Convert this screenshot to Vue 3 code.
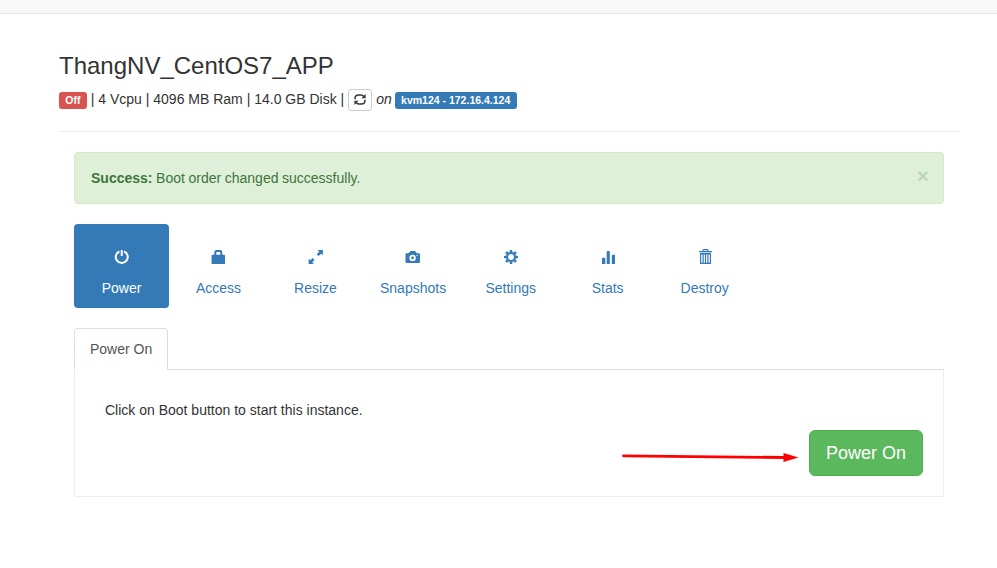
<script setup>
import { ref } from 'vue'

const active = ref('Power')
const alertOpen = ref(true)
const pills = ['Power', 'Access', 'Resize', 'Snapshots', 'Settings', 'Stats', 'Destroy']
</script>

<template>
  <div class="page">
    <div class="navbar"></div>
    <main class="container">
      <h3 class="title">ThangNV_CentOS7_APP</h3>
      <div class="summary">
        <span class="label danger">Off</span>
        <span class="specs">| 4 Vcpu | 4096 MB Ram | 14.0 GB Disk |</span>
        <button class="refresh" aria-label="Refresh">
          <svg width="14" height="14" viewBox="0 0 14 14" fill="none" stroke="#333" stroke-width="1.5">
            <path d="M2 6.3V5.2Q2.2 2 5.6 2H8q1.4 0 2.7 1.3M12 6.7v1.1Q11.8 11 8.4 11H6q-1.4 0-2.7-1.3" />
            <path d="M12.6 1v4.2H8.4zM1.4 12V7.8h4.2z" fill="#333" stroke="none" />
          </svg>
        </button>
        <em class="on">on</em>
        <span class="label primary">kvm124 - 172.16.4.124</span>
      </div>

      <div class="content">
        <div v-if="alertOpen" class="alert">
          <div class="message"><strong>Success:</strong> Boot order changed successfully.</div>
          <button class="close" aria-label="Close" @click="alertOpen = false">×</button>
        </div>

        <nav class="pills">
          <a v-for="name in pills" :key="name" :class="['pill', { active: active === name }]" @click="active = name">
            <svg class="icon" width="16" height="16" viewBox="0 0 16 16" fill="currentColor">
              <g v-if="name === 'Power'" fill="none" stroke="currentColor" stroke-width="2">
                <path d="M5.4 2.5a6 6 0 1 0 4.7 0" />
                <path d="M7.75 1v6" />
              </g>
              <g v-else-if="name === 'Access'">
                <path d="M.6 6.6q0-.8.8-.8h11.8q.8 0 .8.8V15H.6z" />
                <path d="M4.3 6.5V3.2q0-1.2 1.2-1.2h3.6q1.2 0 1.2 1.2v3.3" fill="none" stroke="currentColor" stroke-width="2" />
              </g>
              <g v-else-if="name === 'Resize'">
                <path d="M9.6 1h5.3v5.2l-1.7-1.5-2.7 2.4-1.8-1.8 2.6-2.6zM.7 15V9.8l1.6 1.5 2.4-2.2 1.9 1.8-2.4 2.4L5.9 15z" />
              </g>
              <g v-else-if="name === 'Snapshots'">
                <path fill-rule="evenodd" d="M.5 5.4q0-1.2 1.2-1.2h1.7L5 2.4q.3-.4.8-.4h3.8q.5 0 .8.4L12 4.2h1.8q1.2 0 1.2 1.2v7.4q0 1.2-1.2 1.2H1.7Q.5 14 .5 12.8zM7.6 5.7a3.2 3.2 0 1 0 0 6.4 3.2 3.2 0 0 0 0-6.4zm0 1.8a1.4 1.4 0 1 1 0 2.8 1.4 1.4 0 0 1 0-2.8zM11.5 5.7v1h1.2v-1z" />
              </g>
              <g v-else-if="name === 'Settings'">
                <circle cx="8" cy="8" r="4" fill="none" stroke="currentColor" stroke-width="2.1" />
                <path d="M6.9 1h2.2l.4 2.5h-3zM6.9 15h2.2l.4-2.5h-3zM1 6.9v2.2l2.5.4v-3zM15 6.9v2.2l-2.5.4v-3zM2.2 3.8 3.8 2.2l2 1.4-2.2 2.2zM13.8 3.8l-1.6-1.6-2 1.4 2.2 2.2zM2.2 12.2l1.6 1.6 2-1.4-2.2-2.2zM13.8 12.2l-1.6 1.6-2-1.4 2.2-2.2z" />
              </g>
              <g v-else-if="name === 'Stats'">
                <path d="M2 9.5q0-.8.8-.8h1.7q.8 0 .8.8V15H2zM6.7 2.8q0-.8.8-.8H9q.8 0 .8.8V15H6.7zM11.8 6.5q0-.8.8-.8h1.6q.8 0 .8.8V15h-3.2z" />
              </g>
              <g v-else fill="none" stroke="currentColor">
                <path d="M6 2.5v-1q0-.9.9-.9h3.2q.9 0 .9.9v1M2 2.6h13" stroke-width="1.2" />
                <path d="M3 4.7h11" stroke-width="1.6" />
                <path d="M3.6 4.5v9.9h9.8V4.5M6.1 5v9M8.5 5v9M10.9 5v9" stroke-width="1.2" />
              </g>
            </svg>
            <span>{{ name }}</span>
          </a>
        </nav>

        <div class="tabs"><span class="tab">Power On</span></div>
        <section class="panel">
          <p>Click on Boot button to start this instance.</p>
          <div class="actions">
            <button class="success">Power On</button>
          </div>
        </section>
      </div>
      <svg class="arrow" width="180" height="16" viewBox="0 0 180 16">
        <path d="M2.5 5.8 164 7.5" stroke="red" stroke-width="2.8" stroke-linecap="round" />
        <path d="M162.5 3 177.5 7.5 162.5 12z" fill="red" />
      </svg>
    </main>
  </div>
</template>

<style>
body {
  margin: 0;
  background: #fff;
}
</style>

<style scoped>
.page {
  height: 568px;
  overflow: hidden;
  color: #333;
  font: 14px/20px "Liberation Sans", Arial, sans-serif;
}
.page * {
  box-sizing: border-box;
}
button {
  font-family: inherit;
}
.navbar {
  height: 14px;
  background: #f8f8f8;
  border-bottom: 1px solid #e7e7e7;
}
.container {
  position: relative;
  width: 900px;
  margin-left: 59px;
}
.title {
  margin: 0;
  padding-top: 39px;
  font-size: 24px;
  font-weight: 500;
  line-height: 26px;
}
.summary {
  display: flex;
  gap: 4px;
  align-items: center;
  height: 53px;
  padding-bottom: 11px;
  border-bottom: 1px solid #eee;
}
.specs,
.on {
  margin-top: -2px;
}
.label {
  height: 17px;
  margin-top: 1px;
  padding: 0 6.3px;
  border-radius: 3px;
  color: #fff;
  font-size: 10.5px;
  font-weight: bold;
  line-height: 16px;
}
.danger {
  background: #d9534f;
}
.primary {
  margin-left: -1px;
  background: #337ab7;
}
.refresh {
  display: flex;
  align-items: center;
  justify-content: center;
  width: 24px;
  height: 22px;
  padding: 0;
  border: 1px solid #ccc;
  border-radius: 3px;
  background: #fff;
}
.content {
  padding: 20px 15px 0;
}
.alert {
  display: flex;
  justify-content: space-between;
  height: 52px;
  margin-bottom: 20px;
  padding: 15px 14px 15px 16px;
  border: 1px solid #d6e9c6;
  border-radius: 4px;
  background: #dff0d8;
  color: #3c763d;
}
.message {
  word-spacing: -.3px;
}
.close {
  height: 20px;
  padding: 0;
  border: 0;
  background: none;
  color: #2b7a3b;
  font-size: 21px;
  font-weight: bold;
  line-height: 13px;
  padding-bottom: 5px;
  opacity: .2;
}
.pills {
  display: flex;
  gap: 2px;
  height: 84px;
}
.pill {
  display: flex;
  flex-direction: column;
  align-items: center;
  min-width: 95px;
  padding: 25px 15px 0;
  border-radius: 4px;
  color: #337ab7;
  cursor: pointer;
}
.pill.active {
  background: #337ab7;
  color: #fff;
}
.icon {
  margin-bottom: 13px;
}
.tabs {
  display: flex;
  height: 42px;
  margin-top: 20px;
  border-bottom: 1px solid #ddd;
}
.tab {
  height: 42px;
  padding: 10px 15px;
  border: 1px solid #ddd;
  border-bottom-color: #fff;
  border-radius: 4px 4px 0 0;
  background: #fff;
  color: #555;
}
.panel {
  height: 127px;
  padding: 30px 20px 20px 30px;
  border: 1px solid #eee;
  border-top: 0;
}
.panel p {
  margin: 0 0 10px;
}
.actions {
  display: flex;
  justify-content: flex-end;
}
.success {
  height: 46px;
  padding: 0 16px;
  border: 1px solid #4cae4c;
  border-radius: 6px;
  background: #5cb85c;
  color: #fff;
  font-size: 18px;
  line-height: 24px;
}
.arrow {
  position: absolute;
  left: 562px;
  top: 436px;
}
</style>
